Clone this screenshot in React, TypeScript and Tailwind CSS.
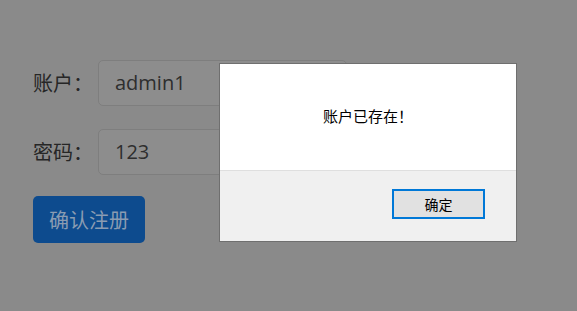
export default function App() {
  return (
    <div className="relative h-[311px] w-[577px] overflow-hidden bg-[#8a8a8a] font-['Open_Sans','Noto_Sans_CJK_SC',sans-serif]">
      <form className="flex flex-col pl-[33px] pt-[60px]">
        <div className="flex items-center">
          <label className="w-[65px] text-[20px] text-[#262626] font-['Noto_Sans_CJK_SC',sans-serif]">账户：</label>
          <div className="flex h-[46px] w-[249px] items-center rounded-[5px] border border-[#7e7e7e] bg-[#8d8d8d] px-[16px] text-[20px] text-[#2e2e2e]">
            admin1
          </div>
        </div>
        <div className="mt-[23px] flex items-center">
          <label className="w-[65px] text-[20px] text-[#262626] font-['Noto_Sans_CJK_SC',sans-serif]">密码：</label>
          <div className="flex h-[46px] w-[249px] items-center rounded-[5px] border border-[#7e7e7e] bg-[#8d8d8d] px-[16px] text-[20px] text-[#2e2e2e]">
            123
          </div>
        </div>
        <div className="mt-[21px]">
          <button
            type="button"
            className="h-[47px] w-[112px] rounded-[5px] bg-[#0d4b8e] text-[20px] text-[#8a9cb2] font-['Noto_Sans_CJK_SC',sans-serif]"
          >
            确认注册
          </button>
        </div>
      </form>

      <div className="absolute left-[219px] top-[63px] flex h-[179px] w-[298px] flex-col border border-[#6f6f6f] bg-white">
        <div className="flex h-[107px] items-center justify-center border-b border-[#dfdfdf] pb-[1px] text-[15px] text-black font-['Noto_Sans_CJK_SC',sans-serif]">
          账户已存在！
        </div>
        <div className="flex flex-1 justify-end bg-[#f0f0f0] pr-[31px] pt-[18px]">
          <button
            type="button"
            className="h-[30px] w-[93px] border-2 border-[#0078d7] bg-[#e1e1e1] text-[14px] text-black font-['Noto_Sans_CJK_SC',sans-serif]"
          >
            确定
          </button>
        </div>
      </div>
    </div>
  );
}
